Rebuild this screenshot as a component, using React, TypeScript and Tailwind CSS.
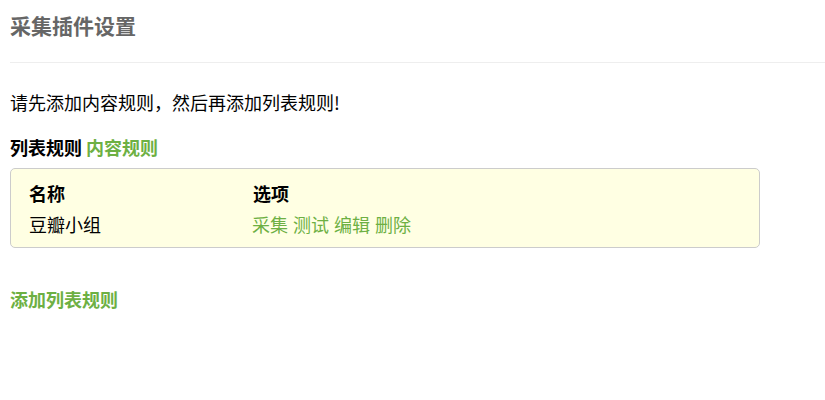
export default function App() {
  const font = { fontFamily: '"Noto Sans CJK SC", "Noto Sans", sans-serif' };
  const options = ['采集', '测试', '编辑', '删除'];
  return (
    <div className="pl-[10px] bg-white min-h-[400px] text-black" style={font}>
      <h1 className="mt-[10px] text-[21px] leading-[30px] font-bold text-[#666]">采集插件设置</h1>
      <div className="mt-[22px] border-t border-[#eee]" />
      <p className="mt-[26px] text-[18px] leading-[26px]">请先添加内容规则，然后再添加列表规则!</p>
      <div className="mt-[19px] text-[18px] leading-[26px] font-bold">
        列表规则 <a className="text-[#6db043]">内容规则</a>
      </div>
      <div className="mt-[8px] w-[750px] bg-[#ffffe3] border border-[#ccc] rounded-[5px] pl-[18px] pt-[11px] pb-[10px] text-[18px] leading-[26px]">
        <div className="flex font-bold">
          <div className="w-[224px]">名称</div>
          <div>选项</div>
        </div>
        <div className="flex mt-[5px]">
          <div className="w-[223px]">豆瓣小组</div>
          <div className="flex gap-[5px] text-[#6db043]">
            {options.map(o => (
              <a key={o}>{o}</a>
            ))}
          </div>
        </div>
      </div>
      <div className="mt-[38px] text-[18px] leading-[26px] font-bold text-[#6db043]">添加列表规则</div>
    </div>
  );
}
